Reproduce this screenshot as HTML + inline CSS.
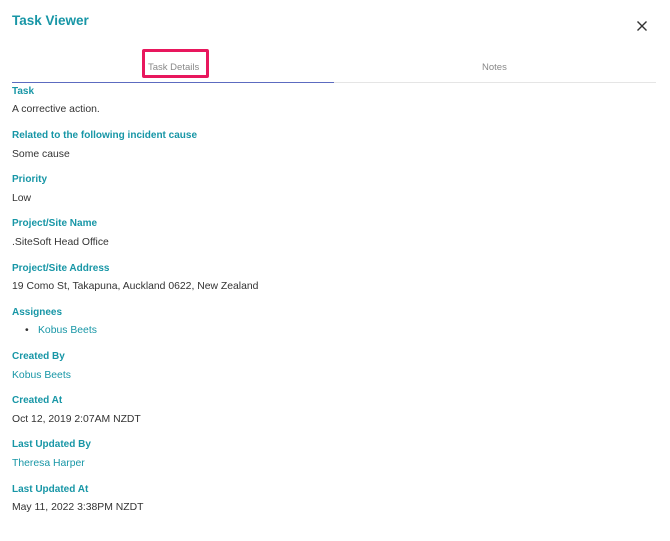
<!DOCTYPE html>
<html><head><style>
body{margin:0;width:670px;height:541px;background:#fff;font-family:"Liberation Sans",sans-serif;position:relative;overflow:hidden}
.t{position:absolute;left:12px;top:13px;font-size:13.5px;font-weight:bold;color:#1796a6}
.x{position:absolute;left:636px;top:20px}
.tab{position:absolute;top:62px;font-size:9.5px;color:#888}
.ul{position:absolute;top:82px;height:1px}
.box{position:absolute;left:142px;top:49px;width:61px;height:23px;border:3px solid #e8175d;border-radius:2px}
.l{position:absolute;left:12px;font-size:10px;font-weight:bold;color:#1796a6}
.v{position:absolute;left:12px;font-size:10.4px;color:#333}
.lk{color:#1796a6}
</style></head><body>
<div class="t">Task Viewer</div>
<svg class="x" width="12" height="12" viewBox="0 0 12 12"><path d="M1.5 1.5L10.5 10.5M10.5 1.5L1.5 10.5" stroke="#333" stroke-width="1.4"/></svg>
<div class="box"></div>
<div class="tab" style="left:148px">Task Details</div>
<div class="tab" style="left:482px">Notes</div>
<div class="ul" style="left:12px;width:322px;background:#5c6bc0"></div>
<div class="ul" style="left:334px;width:322px;background:#e5e5e5"></div>
<div class="l" style="top:86px">Task</div>
<div class="v" style="top:104px">A corrective action.</div>
<div class="l" style="top:130px">Related to the following incident cause</div>
<div class="v" style="top:149px">Some cause</div>
<div class="l" style="top:174px">Priority</div>
<div class="v" style="top:193px">Low</div>
<div class="l" style="top:218px">Project/Site Name</div>
<div class="v" style="top:237px">.SiteSoft Head Office</div>
<div class="l" style="top:263px">Project/Site Address</div>
<div class="v" style="top:281px">19 Como St, Takapuna, Auckland 0622, New Zealand</div>
<div class="l" style="top:307px">Assignees</div>
<div class="v" style="top:325px;left:25px"><span style="color:#333">•</span><span class="lk" style="position:absolute;left:13px;white-space:nowrap">Kobus Beets</span></div>
<div class="l" style="top:351px">Created By</div>
<div class="v lk" style="top:370px">Kobus Beets</div>
<div class="l" style="top:395px">Created At</div>
<div class="v" style="top:414px">Oct 12, 2019 2:07AM NZDT</div>
<div class="l" style="top:439px">Last Updated By</div>
<div class="v lk" style="top:458px">Theresa Harper</div>
<div class="l" style="top:484px">Last Updated At</div>
<div class="v" style="top:502px">May 11, 2022 3:38PM NZDT</div>
</body></html>
